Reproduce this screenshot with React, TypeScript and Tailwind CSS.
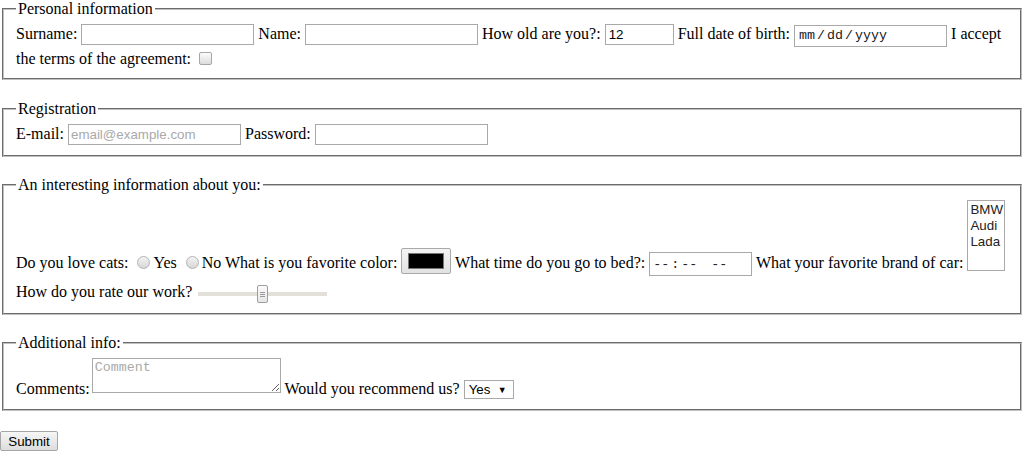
import React from "react";

// plain html-form look, old chrome controls drawn by hand where the native ones differ
const fieldsetCls =
  "mx-[2px] border-2 [border-style:groove] border-[#c0c0c0] px-3 pt-[6px] pb-[10px]";
const inputCls =
  "h-[21px] border border-[#a9a9a9] bg-white px-[2px] font-['Liberation_Sans',Arial,sans-serif] text-[13.33px] leading-[normal] text-black outline-none placeholder:text-[#a9a9a9] align-baseline";

function Checkbox() {
  return (
    <span className="inline-block overflow-hidden w-[13px] h-[13px] ml-[4px] mr-[3px] my-[3px] rounded-[2px] border border-[#a6a6a6] bg-linear-to-b from-[#fcfcfc] to-[#dcdcdc] align-[-4px]" />
  );
}

function Radio() {
  return (
    <span className="inline-block overflow-hidden w-[13px] h-[13px] ml-[5px] mr-[3px] mt-[3px] rounded-full border border-[#b4b4b4] bg-linear-to-b from-[#f4f4f4] to-[#d6d6d6] align-[-1px]" />
  );
}

function DateBox() {
  return (
    <span className="inline-flex items-center w-[153px] h-[22px] mb-[2px] border border-[#a9a9a9] bg-white pl-[4px] font-['Liberation_Mono','Courier_New',monospace] text-[13.33px] leading-[normal] text-[#222]">
      mm<span className="mx-[2px]">/</span>dd<span className="mx-[2px]">/</span>yyyy
    </span>
  );
}

function TimeBox() {
  return (
    <span className="inline-flex items-center w-[103px] h-[24px] border border-[#a9a9a9] bg-white pl-[3px] font-['Liberation_Mono','Courier_New',monospace] text-[13.33px] leading-[normal] text-[#222]">
      --<span className="mx-[2px]">:</span>--<span className="w-[14px]" />--
    </span>
  );
}

function ColorBox() {
  return (
    <span className="inline-block overflow-hidden w-[50px] h-[26px] rounded-[2px] border border-[#a9a9a9] bg-linear-to-b from-[#f4f4f4] to-[#e2e2e2] px-[6px] py-[4px] align-[-6px]">
      <span className="block h-full border border-[#777] bg-black" />
    </span>
  );
}

function CarList() {
  return (
    <span className="inline-block overflow-hidden w-[38px] h-[71px] border border-[#a9a9a9] bg-white pl-[2px] pt-px font-['Liberation_Sans',Arial,sans-serif] text-[13.33px] leading-[16px] text-[#222] align-[-3px]">
      BMW
      <br />
      Audi
      <br />
      Lada
    </span>
  );
}

function Slider() {
  return (
    <span className="inline-flex items-center overflow-hidden w-[129px] h-[18px] ml-[2px] mt-[9px] align-[1px]">
      <span className="w-[59px] h-[4px] bg-[#e3dfd9]" />
      <span className="flex flex-col items-center justify-center gap-px w-[11px] h-[18px] rounded-[2px] border border-[#9e9e9e] bg-linear-to-b from-[#fbfbfb] to-[#e6e6e6]">
        <span className="w-[5px] h-px bg-[#9a9a9a]" />
        <span className="w-[5px] h-px bg-[#9a9a9a]" />
        <span className="w-[5px] h-px bg-[#9a9a9a]" />
      </span>
      <span className="flex-1 h-[4px] bg-[#e3dfd9]" />
    </span>
  );
}

function Dropdown() {
  return (
    <span className="inline-flex items-center justify-between w-[50px] h-[19px] border border-[#a9a9a9] bg-white pl-[4px] pr-[6px] font-['Liberation_Sans',Arial,sans-serif] text-[13.33px] leading-[normal] text-black">
      Yes<span className="text-[9px]">▼</span>
    </span>
  );
}

export default function App() {
  return (
    <div className="min-h-[452px] bg-white text-black font-['Liberation_Serif','Times_New_Roman',serif] text-[16px] leading-[normal]">
      <form onSubmit={(e) => e.preventDefault()}>
        <fieldset className={fieldsetCls}>
          <legend className="px-[2px]">Personal information</legend>
          Surname: <input type="text" className={inputCls + " w-[173px]"} />{" "}
          Name: <input type="text" className={inputCls + " w-[173px]"} />{" "}
          How old are you?:{" "}
          <input type="text" defaultValue="12" className={inputCls + " w-[69px] pl-[3px]"} />{" "}
          Full date of birth: <DateBox /> I accept the terms of the agreement:{" "}
          <Checkbox />
        </fieldset>

        <fieldset className={fieldsetCls + " mt-5"}>
          <legend className="px-[2px]">Registration</legend>
          E-mail:{" "}
          <input
            type="email"
            placeholder="email@example.com"
            className={inputCls + " w-[173px]"}
          />{" "}
          Password: <input type="password" className={inputCls + " w-[173px]"} />
        </fieldset>

        <fieldset className={fieldsetCls + " mt-[19px]"}>
          <legend className="px-[2px]">An interesting information about you:</legend>
          Do you love cats: <Radio />Yes <Radio />No What is you favorite color:{" "}
          <ColorBox /> What time do you go to bed?: <TimeBox /> What your favorite
          brand of car: <CarList />
          <br />
          How do you rate our work? <Slider />
        </fieldset>

        <fieldset className={fieldsetCls + " mt-[19px]"}>
          <legend className="px-[2px]">Additional info:</legend>
          Comments:{" "}
          <textarea
            placeholder="Comment"
            className="-ml-[2px] w-[189px] h-[35px] border border-[#a9a9a9] bg-white px-[2px] py-px font-['Liberation_Mono','Courier_New',monospace] text-[13.33px] leading-[normal] outline-none placeholder:text-[#a9a9a9] align-[1px]"
          />{" "}
          Would you recommend us? <Dropdown />
        </fieldset>

        <button
          type="submit"
          className="mt-5 w-[58px] h-[20px] rounded-[2px] border border-[#a6a6a6] bg-linear-to-b from-[#f6f6f6] to-[#dddddd] font-['Liberation_Sans',Arial,sans-serif] text-[13.33px] leading-[normal] text-black"
        >
          Submit
        </button>
      </form>
    </div>
  );
}
